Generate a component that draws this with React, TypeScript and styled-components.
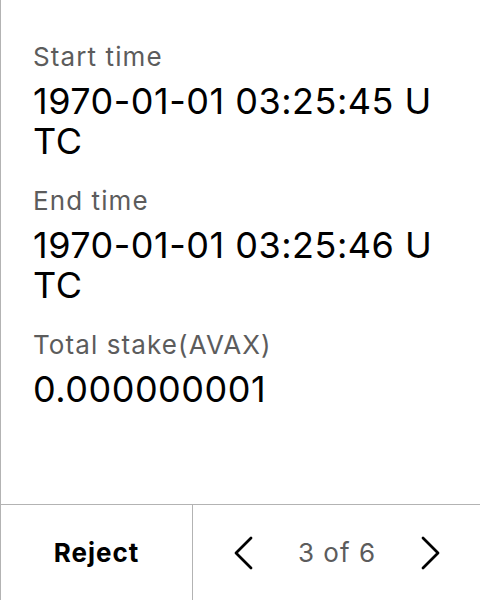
import React from 'react'
import styled, { createGlobalStyle } from 'styled-components'

const GlobalStyle = createGlobalStyle`
  html, body {
    margin: 0;
    padding: 0;
    background: #fff;
  }
  body {
    font-family: Inter, 'Noto Sans', sans-serif;
  }
`

const Screen = styled.div`
  box-sizing: border-box;
  width: 480px;
  height: 600px;
  display: flex;
  flex-direction: column;
  border-left: 1px solid #b3b3b3;
  background: #fff;
`

const Details = styled.div`
  flex: 1;
  display: flex;
  flex-direction: column;
  gap: 24px;
  padding: 41px 30px 0 32px;
`

const Field = styled.div`
  display: flex;
  flex-direction: column;
  gap: 8px;
`

const Label = styled.div`
  font-size: 26px;
  line-height: 32px;
  letter-spacing: 1.1px;
  color: #5c5c5c;
`

const Value = styled.div`
  font-size: 36px;
  line-height: 40px;
  letter-spacing: 0.5px;
  color: #000;
  word-break: break-all;
`

const Footer = styled.div`
  box-sizing: border-box;
  display: grid;
  grid-template-columns: 192px 1fr;
  height: 96px;
  border-top: 1px solid #b3b3b3;
`

const RejectButton = styled.button`
  border: none;
  border-right: 1px solid #b3b3b3;
  background: none;
  font-family: inherit;
  font-size: 26px;
  font-weight: 700;
  letter-spacing: 1px;
  color: #000;
  padding: 0;
  cursor: pointer;
`

const Pager = styled.div`
  display: flex;
  align-items: center;
  justify-content: space-between;
  padding: 0 40px 0 41px;
`

const NavButton = styled.button`
  display: flex;
  align-items: center;
  justify-content: center;
  width: 20px;
  height: 34px;
  border: none;
  background: none;
  padding: 0;
  cursor: pointer;
`

const PageText = styled.span`
  font-size: 26px;
  letter-spacing: 1px;
  color: #5c5c5c;
`

const Chevron = ({ dir }: { dir: 'left' | 'right' }) => (
  <svg width="20" height="34" viewBox="0 0 20 34" fill="none">
    <polyline
      points={dir === 'left' ? '17,2 2,17 17,32' : '3,2 18,17 3,32'}
      stroke="#000"
      strokeWidth="2.8"
      strokeLinecap="round"
      strokeLinejoin="round"
    />
  </svg>
)

const fields = [
  { label: 'Start time', value: '1970-01-01 03:25:45 UTC' },
  { label: 'End time', value: '1970-01-01 03:25:46 UTC' },
  { label: 'Total stake(AVAX)', value: '0.000000001' },
]

export default function App() {
  return (
    <>
      <GlobalStyle />
      <Screen>
        <Details>
          {fields.map((f) => (
            <Field key={f.label}>
              <Label>{f.label}</Label>
              <Value>{f.value}</Value>
            </Field>
          ))}
        </Details>
        <Footer>
          <RejectButton>Reject</RejectButton>
          <Pager>
            <NavButton aria-label="Previous">
              <Chevron dir="left" />
            </NavButton>
            <PageText>3 of 6</PageText>
            <NavButton aria-label="Next">
              <Chevron dir="right" />
            </NavButton>
          </Pager>
        </Footer>
      </Screen>
    </>
  )
}
